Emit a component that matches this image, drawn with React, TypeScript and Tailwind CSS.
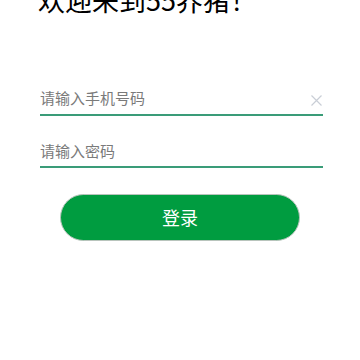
import React from "react";

export default function App() {
  return (
    <div
      className="w-[360px] h-[360px] bg-white overflow-hidden pl-10 pr-[37px]"
      style={{ fontFamily: '"Noto Sans CJK SC", "Liberation Sans", sans-serif' }}
    >
      <h1 className="-mt-[18px] h-[36px] text-[27px] leading-[36px] text-black font-normal whitespace-nowrap -ml-[2px]">
        欢迎来到55养猪！
      </h1>
      <div className="mt-[65px] h-[31px] flex items-center">
        <input
          className="flex-1 min-w-0 bg-transparent outline-none text-[15px] text-[#333] placeholder:text-[#7a7a7a]"
          placeholder="请输入手机号码"
        />
        <svg width="11" height="11" viewBox="0 0 11 11" className="mr-[1px] mt-[3px]">
          <path d="M0.5 0.5 L10.5 10.5 M10.5 0.5 L0.5 10.5" stroke="#c9ced6" strokeWidth="1.2" />
        </svg>
      </div>
      <div className="h-[2px] bg-[#3a9c78]" />
      <div className="mt-[20px] h-[30px] flex items-center">
        <input
          type="password"
          className="flex-1 min-w-0 bg-transparent outline-none text-[15px] text-[#333] placeholder:text-[#7a7a7a]"
          placeholder="请输入密码"
        />
      </div>
      <div className="h-[2px] bg-[#3a9c78]" />
      <button className="mt-[26px] ml-5 w-[240px] h-[47px] rounded-full bg-[#009c40] border border-[#b8c4bc] text-white text-[18px] font-normal flex items-center justify-center">
        登录
      </button>
    </div>
  );
}
